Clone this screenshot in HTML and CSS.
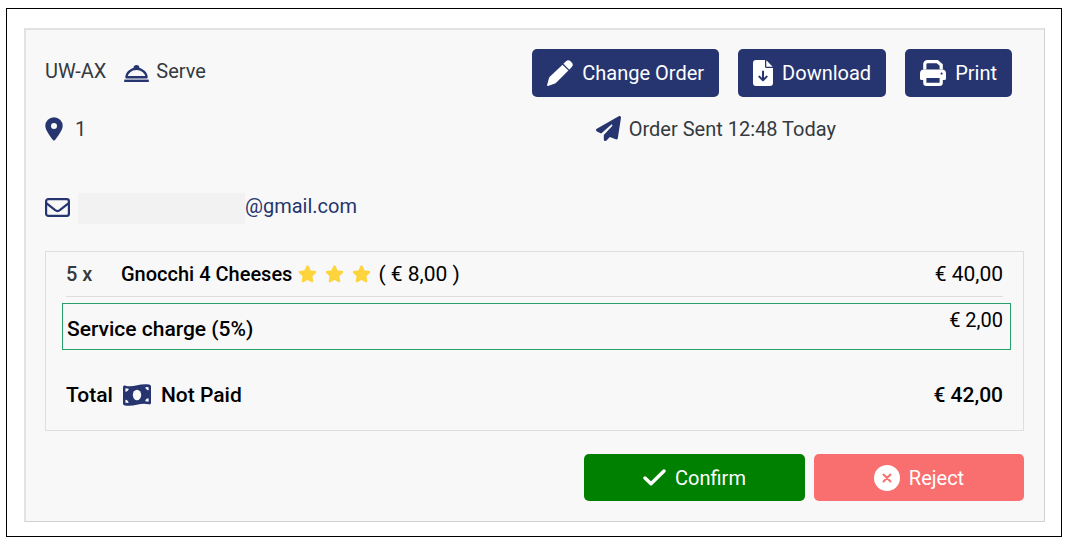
FILE: index.html
```
<!DOCTYPE html>
<html lang="en">
<head>
    <meta charset="UTF-8">
    <meta name="viewport" content="width=device-width, initial-scale=1.0">
    <title>Order UW-AX</title>
    <link rel="stylesheet" href="styles.css">
</head>
<body>
    <div class="frame">
        <div class="order-card">
            <div class="order-header">
                <div class="order-code">
                    <span>UW-AX</span>
                    <span class="label">
                        <svg class="icon icon-serve" width="25" height="17" viewBox="0 0 25 17">
                            <path d="M2.5 12.300a10 8.500 0 0 1 20 0z" fill="none" stroke="currentColor" stroke-width="2.400" stroke-linejoin="round"/>
                            <path d="M9.600 3.800V2.600a2.900 2.600 0 0 1 5.800 0v1.200z" fill="currentColor"/>
                            <path d="M.2 14.600h24.600V17H.2z" fill="currentColor"/>
                        </svg>
                        Serve
                    </span>
                </div>
                <div class="header-actions">
                    <button type="button" class="btn btn-primary">
                        <svg class="icon" width="26" height="26" viewBox="0 0 26 26" fill="currentColor">
                            <path d="M15.500 4.700l5.900 5.900L9.400 22.600c-.6.6-1.300 1-2.100 1.200L1 25.900c-.6.1-1-.3-.9-.9l1.700-6.300c.2-.8.6-1.500 1.200-2.100z"/>
                            <path d="M16.400 3.800l2.600-2.600c1.500-1.500 3.200-1.200 4.500.1l1.200 1.200c1.300 1.300 1.600 3 .1 4.500l-2.500 2.700z"/>
                        </svg>
                        Change Order
                    </button>
                    <button type="button" class="btn btn-primary">
                        <svg class="icon" width="20" height="26" viewBox="0 0 20 26">
                            <path d="M3 0h9v6.500A1.500 1.500 0 0 0 13.500 8H20v15a3 3 0 0 1-3 3H3a3 3 0 0 1-3-3V3a3 3 0 0 1 3-3zM13.300.3L19.700 6.700h-6.400z" fill="currentColor"/>
                            <path d="M10 11.500v8.500M6.300 16.600L10 20.200l3.700-3.600" fill="none" stroke="#26356f" stroke-width="2" stroke-linecap="round" stroke-linejoin="round"/>
                        </svg>
                        Download
                    </button>
                    <button type="button" class="btn btn-primary">
                        <svg class="icon" width="26" height="26" viewBox="0 0 26 26">
                            <path d="M4.800 9.500V4.200a2.600 2.600 0 0 1 2.600-2.600h9.800L21.200 5v4.500" fill="none" stroke="currentColor" stroke-width="3.200"/>
                            <path d="M4 9.500h18a4 4 0 0 1 4 4v5a1.600 1.600 0 0 1-1.600 1.600H1.600A1.600 1.600 0 0 1 0 18.500v-5a4 4 0 0 1 4-4z" fill="currentColor"/>
                            <path d="M4.800 16.500h16.400v6.300a1.600 1.600 0 0 1-1.600 1.600H6.400a1.600 1.600 0 0 1-1.600-1.600z" fill="#26356f" stroke="currentColor" stroke-width="3.200"/>
                            <circle cx="21.600" cy="13.600" r="1.100" fill="#26356f"/>
                        </svg>
                        Print
                    </button>
                </div>
            </div>

            <div class="order-info">
                <span class="label">
                    <svg class="icon icon-pin" width="18" height="24" viewBox="0 0 18 24">
                        <path fill-rule="evenodd" fill="currentColor" d="M9 .2A8.700 8.700 0 0 1 17.700 8.900c0 4-5.200 10.800-7.700 14a1.300 1.300 0 0 1-2 0C5.500 19.700.3 12.900.3 8.900A8.700 8.700 0 0 1 9 .2zM9 5.900a3 3 0 1 0 0 6 3 3 0 0 0 0-6z"/>
                    </svg>
                    1
                </span>
                <span class="label">
                    <svg class="icon" width="25" height="25" viewBox="0 0 512 512" fill="currentColor">
                        <path d="M498.100 5.600c10.100 7 15.400 19.100 13.500 31.200l-64 416c-1.500 9.700-7.400 18.200-16 23s-18.900 5.400-28 1.600L284 427.700l-68.500 74.100c-8.900 9.700-22.900 12.900-35.200 8.100S160 493.200 160 480v-83.600c0-4 1.500-7.800 4.200-10.700L331.800 202.800c5.800-6.300 5.600-16-.4-22s-15.700-6.400-22-.7L106 360.800l-88.300-44.200C7.100 311.300.3 300.700 0 288.900s5.900-22.800 16.100-28.700l448-256c10.700-6.100 23.900-5.500 34 1.400z"/>
                    </svg>
                    Order Sent 12:48 Today
                </span>
            </div>

            <div class="contact">
                <svg class="icon" width="25" height="19" viewBox="0 0 25 19" fill="none" stroke="currentColor" stroke-width="2.200" stroke-linejoin="round">
                    <rect x="1.100" y="1.100" width="22.800" height="16.800" rx="2.200"/>
                    <path d="M1.600 5.300l8.600 6.900c1.500 1.100 3.100 1.100 4.600 0l8.600-6.900"/>
                </svg>
                <a href="#" class="email"><span class="redacted"></span>@gmail.com</a>
            </div>

            <div class="order-lines">
                <div class="line">
                    <span class="qty">5 x</span>
                    <span class="item-name">Gnocchi 4 Cheeses</span>
                    <span class="stars">
                        <svg width="21" height="20" viewBox="0 0 21 20"><path d="M10.500 2.300l2.400 5 5.400.8-3.900 3.800.9 5.400-4.800-2.500-4.800 2.500.9-5.400-3.900-3.800 5.400-.8z"/></svg>
                        <svg width="21" height="20" viewBox="0 0 21 20"><path d="M10.500 2.300l2.400 5 5.400.8-3.900 3.800.9 5.400-4.800-2.500-4.800 2.500.9-5.400-3.900-3.800 5.400-.8z"/></svg>
                        <svg width="21" height="20" viewBox="0 0 21 20"><path d="M10.500 2.300l2.400 5 5.400.8-3.900 3.800.9 5.400-4.800-2.500-4.800 2.500.9-5.400-3.900-3.800 5.400-.8z"/></svg>
                    </span>
                    <span class="unit-price">( € 8,00 )</span>
                    <span class="price">€ 40,00</span>
                </div>
                <div class="service-charge">
                    <span class="charge-name">Service charge (5%)</span>
                    <span class="price">€ 2,00</span>
                </div>
                <div class="total">
                    <span>Total</span>
                    <svg class="icon" width="28" height="22" viewBox="0 0 28 22">
                        <path d="M0 3.300C0 2 1.200 1.300 2.500 1.700 10 4 17-1.200 26 .5c1.200.2 2 .9 2 2v16.200c0 1.300-1.200 2-2.500 1.600C18 18 11 23.200 2 21.500c-1.200-.2-2-.9-2-2z" fill="currentColor"/>
                        <ellipse cx="14" cy="11" rx="4.200" ry="5.200" fill="#f8f8f8"/>
                        <path d="M2.400 15.800c1.800 0 3.200 1.500 3.200 3.200l-3.200-.3zM2.400 7.700V4.300l3.300.5c0 1.600-1.500 2.900-3.300 2.900zM25.600 6.200c-1.800 0-3.200-1.500-3.200-3.200l3.200.3zM25.600 14.300v3.400l-3.300-.5c0-1.600 1.500-2.900 3.300-2.900z" fill="#f8f8f8"/>
                    </svg>
                    <span>Not Paid</span>
                    <span class="price">€ 42,00</span>
                </div>
            </div>

            <div class="order-footer">
                <button type="button" class="btn btn-confirm">
                    <svg class="icon" width="23" height="17" viewBox="0 0 23 17">
                        <path d="M2 9l6 5.800L21 2" fill="none" stroke="currentColor" stroke-width="3.400" stroke-linecap="round" stroke-linejoin="round"/>
                    </svg>
                    Confirm
                </button>
                <button type="button" class="btn btn-reject">
                    <svg class="icon" width="26" height="26" viewBox="0 0 26 26">
                        <circle cx="13" cy="13" r="13" fill="currentColor"/>
                        <path d="M9.500 9.500l7 7M16.500 9.500l-7 7" stroke="#f96e6e" stroke-width="2" stroke-linecap="round"/>
                    </svg>
                    Reject
                </button>
            </div>
        </div>
    </div>
</body>
</html>
```

FILE: styles.css
```
* {
    margin: 0;
    padding: 0;
    box-sizing: border-box;
}

body {
    font-family: Roboto, "Liberation Sans", sans-serif;
    font-size: 20px;
    line-height: 24px;
    color: #343a40;
    background: white;
    padding: 8px 7px 4px 6px;
}

.frame {
    border: 1px solid black;
    padding: 19px 16px 14px 17px;
}

.order-card {
    background: #f8f8f8;
    border: 2px solid #e2e2e2;
    border-right: 1px solid #d2d2d2;
    border-bottom: 1px solid #d2d2d2;
    padding: 19px 20px 20px 19px;
}

.icon {
    flex: none;
    color: #26356f;
}

.label {
    display: flex;
    align-items: center;
    gap: 8px;
}

.order-header {
    display: flex;
    justify-content: space-between;
    align-items: flex-start;
    padding-right: 12px;
}

.order-code {
    display: flex;
    gap: 18px;
    line-height: 44px;
}

.order-code .label {
    gap: 7px;
}

.icon-serve {
    margin-top: 4px;
}

.header-actions {
    display: flex;
    gap: 19px;
}

.btn {
    display: flex;
    align-items: center;
    justify-content: center;
    gap: 9px;
    height: 48px;
    padding: 0 15px;
    border: none;
    border-radius: 5px;
    font: inherit;
    color: white;
    cursor: pointer;
}

.btn .icon {
    color: white;
}

.btn-primary {
    background: #26356f;
}

.btn-confirm {
    flex: 0 1 221px;
    background: #008000;
}

.btn-reject {
    flex: 0 1 210px;
    background: #f96e6e;
}

.order-info {
    display: grid;
    grid-template-columns: 9fr 7fr;
    margin-top: 19px;
}

.icon-pin {
    margin-right: 4px;
}

.contact {
    display: flex;
    align-items: flex-start;
    gap: 8px;
    margin-top: 52px;
}

.contact .icon {
    margin-top: 5px;
}

.email {
    display: flex;
    align-items: flex-start;
    line-height: 26px;
    color: #26356f;
    text-decoration: none;
}

.redacted {
    width: 167px;
    height: 31px;
    background: #f2f2f2;
}

.order-lines {
    margin-top: 27px;
    border: 1px solid #dedede;
    color: black;
}

.line {
    display: flex;
    align-items: center;
    height: 45px;
    margin: 0 20px;
    border-bottom: 1px solid #dedede;
}

.qty {
    width: 55px;
    font-weight: 500;
    color: #343a40;
}

.item-name,
.charge-name {
    font-weight: 500;
}

.stars {
    display: flex;
    gap: 6px;
    margin: 0 6px 0 5px;
}

.stars path {
    fill: #fdd43c;
    stroke: #fdd43c;
    stroke-width: 2;
    stroke-linejoin: round;
}

.unit-price,
.line .price {
    font-size: 21px;
}

.price {
    margin-left: auto;
}

.service-charge {
    display: flex;
    align-items: flex-start;
    margin: 6px 12px 0 16px;
    padding: 4px 7px 8px 4px;
    border: 1px solid #26a269;
}

.charge-name {
    padding-top: 9px;
    font-size: 21px;
}

.total {
    display: flex;
    align-items: center;
    gap: 10px;
    padding: 33px 20px 23px;
    font-size: 21px;
    font-weight: 500;
}

.order-footer {
    display: flex;
    justify-content: flex-end;
    gap: 9px;
    margin-top: 23px;
}

.order-footer .btn {
    height: 47px;
}
```
